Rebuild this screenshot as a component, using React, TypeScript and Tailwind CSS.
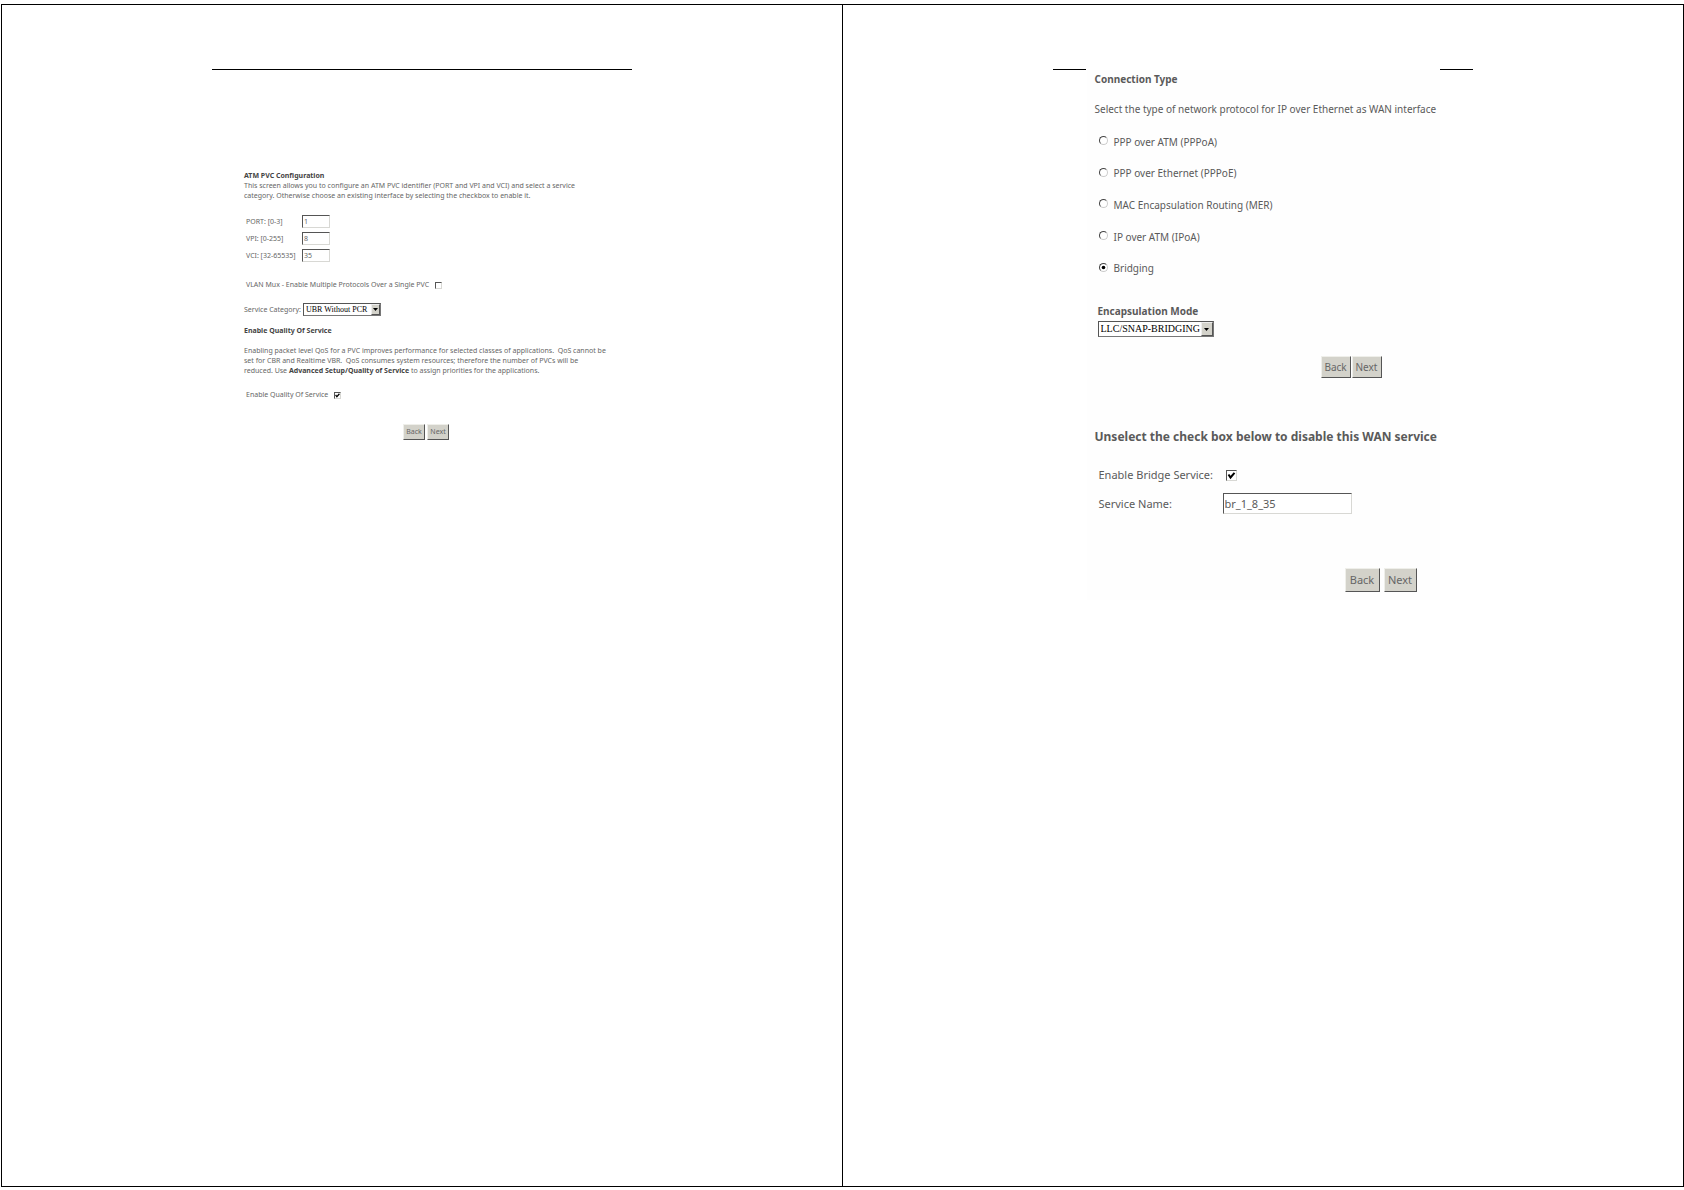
import type { InputHTMLAttributes, ReactNode } from "react";

const bevelIn =
  "appearance-none rounded-none bg-white border-t border-l border-t-[#555] border-l-[#555] border-b border-r border-b-[#d8d8d4] border-r-[#d8d8d4]";

function PushButton({ children, className }: { children: ReactNode; className: string }) {
  return (
    <button
      type="button"
      className={`border border-t-[#efefea] border-l-[#efefea] border-r-[#555] border-b-[#555] bg-[#d3d2ca] text-center text-[#666] ${className}`}
    >
      {children}
    </button>
  );
}

function CheckBox({ className, ...rest }: { className: string } & InputHTMLAttributes<HTMLInputElement>) {
  return (
    <span className={`relative inline-flex shrink-0 ${className}`}>
      <input type="checkbox" className={`peer size-full ${bevelIn}`} {...rest} />
      <svg
        viewBox="0 0 11 11"
        className="pointer-events-none absolute inset-0 hidden size-full peer-checked:block"
        fill="none"
        stroke="#000"
        strokeWidth="2"
      >
        <path d="M2.5 4.5 4.5 7.5 8.5 2.8" />
      </svg>
    </span>
  );
}

function Radio({ id, label, checked }: { id: string; label: string; checked?: boolean }) {
  return (
    <div className="flex items-center">
      <span className="relative inline-flex size-[9px]">
        <input
          type="radio"
          name="connection"
          id={id}
          defaultChecked={checked}
          className="peer size-full appearance-none rounded-full border border-t-[#444] border-l-[#444] border-r-[#ccc] border-b-[#ccc] bg-white"
        />
        <svg viewBox="0 0 9 9" className="pointer-events-none absolute inset-0 hidden size-full peer-checked:block">
          <circle cx="4.5" cy="4.5" r="1.8" fill="#000" />
        </svg>
      </span>
      <label htmlFor={id} className="pt-0.5 pl-1.5">
        {label}
      </label>
    </div>
  );
}

function DropDown({ id, option, className, arrow }: { id: string; option: string; className: string; arrow: string }) {
  return (
    <span className={`relative inline-flex ${className}`}>
      <select
        id={id}
        className="size-full appearance-none border border-t-[#555] border-l-[#555] border-r-[#777] border-b-[#777] bg-white pl-0.5 font-['Liberation_Serif',serif] text-black"
      >
        <option>{option}</option>
      </select>
      <span
        className={`pointer-events-none absolute inset-y-px right-px flex items-center justify-center border border-t-[#eee] border-l-[#eee] border-r-[#555] border-b-[#555] bg-[#d3d2ca] ${arrow}`}
      >
        <svg viewBox="0 0 5 3" className="h-[3px] w-[5px]">
          <path d="M0 0h5L2.5 3z" fill="#000" />
        </svg>
      </span>
    </span>
  );
}

const pvcFields = [
  { id: "port", label: "PORT: [0-3]", value: "1" },
  { id: "vpi", label: "VPI: [0-255]", value: "8" },
  { id: "vci", label: "VCI: [32-65535]", value: "35" },
];

function AtmPvcPage() {
  return (
    <section className="min-w-0 flex-1 pt-16">
      <div className="mx-auto w-full max-w-[420px]">
        <div role="separator" className="h-px bg-black" />
        <form className="flex flex-col pt-[101px] pr-4 pl-8 text-[7px] leading-[10px] whitespace-nowrap text-[#666]">
          <h1 className="font-bold text-[#444]">ATM PVC Configuration</h1>
          <p>
            This screen allows you to configure an ATM PVC identifier (PORT and VPI and VCI) and select a service
            <br />
            category. Otherwise choose an existing interface by selecting the checkbox to enable it.
          </p>
          <div className="mt-3.5 flex flex-col gap-1 pl-0.5">
            {pvcFields.map((f) => (
              <div key={f.id} className="flex h-[13px] items-center">
                <label htmlFor={f.id} className="w-14">
                  {f.label}
                </label>
                <input id={f.id} type="text" defaultValue={f.value} className={`h-[13px] w-7 pl-px ${bevelIn}`} />
              </div>
            ))}
          </div>
          <div className="mt-[18px] flex items-center gap-1.5 pl-0.5">
            <label htmlFor="vlan">VLAN Mux - Enable Multiple Protocols Over a Single PVC</label>
            <CheckBox id="vlan" className="size-[7px]" />
          </div>
          <div className="mt-[13px] flex items-center">
            <label htmlFor="category" className="w-[59px]">
              Service Category:
            </label>
            <DropDown id="category" option="UBR Without PCR" className="h-[13px] w-[78px] text-[8px]" arrow="w-[9px]" />
          </div>
          <h2 className="mt-2.5 font-bold text-[#444]">Enable Quality Of Service</h2>
          <p className="mt-2.5">
            Enabling packet level QoS for a PVC improves performance for selected classes of applications.&nbsp; QoS cannot be
            <br />
            set for CBR and Realtime VBR.&nbsp; QoS consumes system resources; therefore the number of PVCs will be
            <br />
            reduced. Use <b className="text-[#444]">Advanced Setup/Quality of Service</b> to assign priorities for the
            applications.
          </p>
          <div className="mt-3.5 flex items-center gap-1.5 pl-0.5">
            <label htmlFor="qos">Enable Quality Of Service</label>
            <CheckBox id="qos" defaultChecked className="size-[7px]" />
          </div>
          <div className="mt-6 flex gap-0.5 pl-[159px]">
            <PushButton className="h-4 w-[22px]">Back</PushButton>
            <PushButton className="h-4 w-[22px]">Next</PushButton>
          </div>
        </form>
      </div>
    </section>
  );
}

function ConnectionPage() {
  return (
    <section className="min-w-0 flex-1 border-l border-black pt-16">
      <div className="mx-auto flex w-full max-w-[420px] justify-between">
        <div className="h-px w-[33px] bg-black" />
        <div className="h-px w-[33px] bg-black" />
      </div>
      <div className="mx-auto w-full max-w-[353px] bg-[#fefefe] text-[#5a5a5a]">
        <form className="flex flex-col pt-[3px] pl-2 text-[10px] leading-3">
          <h1 className="font-bold">Connection Type</h1>
          <p className="mt-[18px] whitespace-nowrap">
            Select the type of network protocol for IP over Ethernet as WAN interface
          </p>
          <div className="mt-2.5 grid h-[158px] grid-rows-5 pl-1">
            <Radio id="pppoa" label="PPP over ATM (PPPoA)" />
            <Radio id="pppoe" label="PPP over Ethernet (PPPoE)" />
            <Radio id="mer" label="MAC Encapsulation Routing (MER)" />
            <Radio id="ipoa" label="IP over ATM (IPoA)" />
            <Radio id="bridging" label="Bridging" checked />
          </div>
          <label htmlFor="encap" className="mt-[22px] pl-[3px] font-bold">
            Encapsulation Mode
          </label>
          <div className="mt-1 flex pl-[3px]">
            <DropDown id="encap" option="LLC/SNAP-BRIDGING" className="h-4 w-[116px]" arrow="w-3" />
          </div>
          <div className="mt-[19px] flex gap-px pl-[226px]">
            <PushButton className="h-[22px] w-[30px]">Back</PushButton>
            <PushButton className="h-[22px] w-[30px]">Next</PushButton>
          </div>
        </form>
        <form className="mt-[52px] flex flex-col pb-2 pl-2 text-[11px] leading-[14px]">
          <h2 className="text-[12px] leading-[14px] font-bold whitespace-nowrap">
            Unselect the check box below to disable this WAN service
          </h2>
          <div className="mt-6 flex items-center pl-1">
            <label htmlFor="bridge" className="w-[127px]">
              Enable Bridge Service:
            </label>
            <CheckBox id="bridge" defaultChecked className="size-[11px]" />
          </div>
          <div className="mt-[11px] flex items-center pl-1">
            <label htmlFor="service" className="w-[124px]">
              Service Name:
            </label>
            <input id="service" type="text" defaultValue="br_1_8_35" className={`h-[21px] w-[129px] pl-px ${bevelIn}`} />
          </div>
          <div className="mt-[54px] flex gap-1 pl-[250px]">
            <PushButton className="h-6 w-[35px]">Back</PushButton>
            <PushButton className="h-6 w-[33px]">Next</PushButton>
          </div>
        </form>
      </div>
    </section>
  );
}

export default function App() {
  return (
    <main className="flex min-h-screen bg-white pt-1 pb-[3px] pl-px font-['Noto_Sans',sans-serif]">
      <div className="flex min-w-0 flex-1 border border-black">
        <AtmPvcPage />
        <ConnectionPage />
      </div>
    </main>
  );
}
